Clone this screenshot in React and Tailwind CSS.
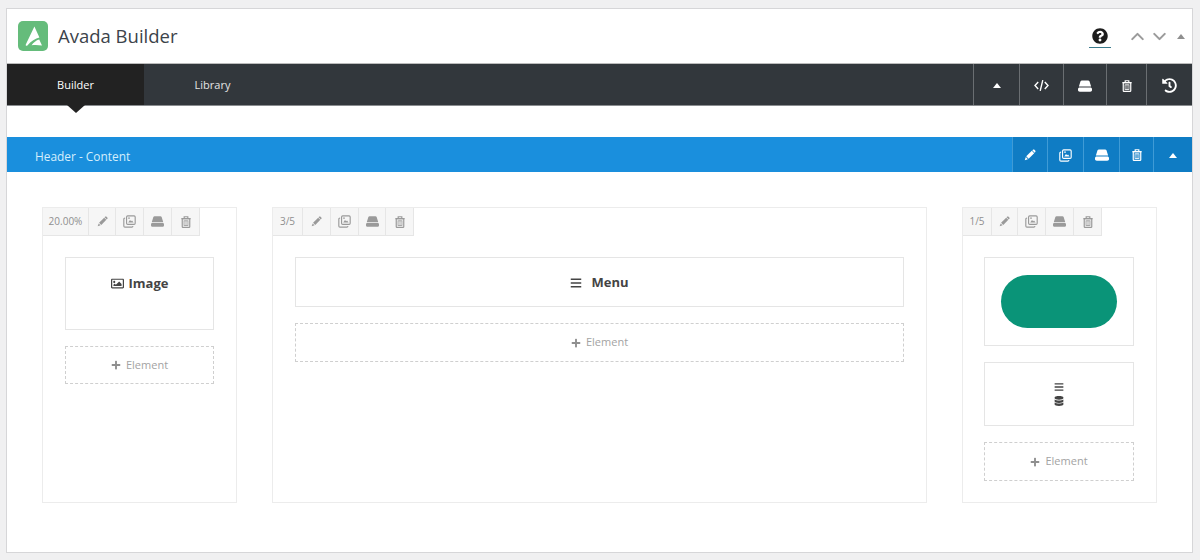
import { ChevronUp, ChevronDown } from "lucide-react";
import {
  FaBars,
  FaDatabase,
  FaHistory,
  FaPlus,
  FaQuestionCircle,
  FaRegImage,
} from "react-icons/fa";

const font = "font-['Open_Sans','Noto_Sans',sans-serif]";

const Pen = ({ size = 12 }) => (
  <svg width={size} height={size} viewBox="0 0 16 16" fill="currentColor">
    <path d="M10.4 2.4 13.6 5.6 6.2 13 3 9.8Z" />
    <path d="M2.4 10.8 5.2 13.6 1 15Z" />
    <path d="M11.6 1.2c.8-.8 1.6-.8 2.3-.1l1 1c.7.7.7 1.5-.1 2.3l-.6.6-3.2-3.2Z" />
  </svg>
);

const Copy = ({ size = 13 }) => (
  <svg width={size} height={size} viewBox="0 0 16 16" fill="none" stroke="currentColor" strokeWidth="1.4">
    <rect x="4.4" y="1" width="10.6" height="10.6" rx="1.4" />
    <path d="M2.6 3.8h-.2C1.6 3.8 1 4.4 1 5.2v8.4c0 .8.6 1.4 1.4 1.4h8.4c.8 0 1.4-.6 1.4-1.4v-.2" />
    <path d="M6.4 9.2 8.6 6l1.5 1.8 1-1 1.9 2.4Z" fill="currentColor" stroke="none" />
    <circle cx="7.4" cy="3.9" r="1" fill="currentColor" stroke="none" />
  </svg>
);

const Drive = ({ size = 14 }) => (
  <svg width={size} height={size} viewBox="0 0 16 16" fill="currentColor">
    <path d="M4.4 1.6h7.2c.7 0 1.2.3 1.5.9L15 8.6H1l1.9-6.1c.3-.6.8-.9 1.5-.9Z" />
    <path d="M2 9.6h12c1.1 0 2 .8 2 1.9v1c0 1.1-.9 2-2 2H2c-1.1 0-2-.9-2-2v-1c0-1.1.9-1.9 2-1.9Z" />
  </svg>
);

const Trash = ({ size = 13 }) => (
  <svg width={size} height={size} viewBox="0 0 16 16" fill="none" stroke="currentColor" strokeWidth="1.6">
    <path d="M1.8 3.4h12.4M5.6 3.2V1h4.8v2.2" />
    <rect x="3" y="3.4" width="10" height="11.8" rx="1" />
    <rect x="5.4" y="6.4" width="5.2" height="6.2" strokeWidth="1.1" />
    <path d="M8 6.4v6.2" strokeWidth="1" />
  </svg>
);

const Code = () => (
  <svg width="15" height="13" viewBox="0 0 15 13" fill="none" stroke="currentColor" strokeWidth="1.4">
    <path d="M4.2 3 1 6.5 4.2 10M10.8 3 14 6.5 10.8 10M8.8 1.2 6.2 11.8" />
  </svg>
);

const Caret = ({ className = "" }) => (
  <span className={`h-0 w-0 border-x-[4px] border-b-[5px] border-x-transparent ${className}`} />
);

const Logo = () => (
  <div className="flex h-[30px] w-[30px] items-center justify-center rounded-[5px] bg-[#65bc7b]">
    <svg width="24" height="24" viewBox="0 0 24 24" fill="#fff">
      <path d="M13.4 2.6 18.4 13.6C14.6 14.4 9.8 17.6 6.4 21.4 5.4 22 4.4 21.4 4.8 20.4Z" />
      <path d="M18.2 15.6 21 21.6C17.6 20.8 13.6 20.8 10.6 21.2 12.4 18.6 15.2 16.4 18.2 15.6Z" />
    </svg>
  </div>
);

const BarButton = ({ width, borderClass, children }) => (
  <div style={{ width }} className={`flex h-full items-center justify-center border-l ${borderClass}`}>
    {children}
  </div>
);

const ToolCell = ({ width, children }) => (
  <div
    style={{ width }}
    className="flex h-full items-center justify-center border-r border-[#e6e6e6] text-[#9a9a9a]"
  >
    {children}
  </div>
);

const ColumnTools = ({ label, widths }) => (
  <div className="flex h-[28px] w-fit border-b border-[#e6e6e6] bg-[#f6f6f6]">
    <ToolCell width={widths[0]}>
      <span className="text-[10px] text-[#8f8f8f]">{label}</span>
    </ToolCell>
    <ToolCell width={widths[1]}><Pen size={11} /></ToolCell>
    <ToolCell width={widths[2]}><Copy /></ToolCell>
    <ToolCell width={widths[3]}><Drive size={13} /></ToolCell>
    <ToolCell width={widths[4]}><Trash size={12} /></ToolCell>
  </div>
);

const AddElement = ({ height = 39 }) => (
  <div
    style={{ height }}
    className="flex items-center justify-center gap-[5px] border border-dashed border-[#cfcfcf] text-[11px] text-[#a3a3a3]"
  >
    <FaPlus size={10} className="text-[#8f8f8f]" />
    <span>Element</span>
  </div>
);

const ElementBox = ({ height, className = "", children }) => (
  <div style={{ height }} className={`flex justify-center border border-[#e5e5e5] ${className}`}>
    {children}
  </div>
);

const Column = ({ width, label, widths, bodyClass = "px-[22px]", children }) => (
  <div style={{ width }} className="h-[296px] border border-[#ececec] bg-white">
    <ColumnTools label={label} widths={widths} />
    <div className={`flex flex-col gap-4 pt-[21px] ${bodyClass}`}>{children}</div>
  </div>
);

export default function App() {
  return (
    <div className={`h-[560px] w-[1200px] overflow-hidden bg-[#f0f0f1] pl-[6px] pt-[8px] ${font}`}>
      <div className="h-[545px] w-[1187px] border border-[#d6d6d8] bg-white">
        {/* title row */}
        <div className="flex h-[54px] items-center pl-[11px]">
          <Logo />
          <h1 className="ml-[10px] text-[18.5px] text-[#3c434a]">Avada Builder</h1>
          <div className="ml-auto flex items-center">
            <div className="flex h-[24px] w-[22px] items-center justify-center border-b border-[#3a7a8c] text-[#1d1d1d]">
              <FaQuestionCircle size={16} />
            </div>
            <ChevronUp size={21} strokeWidth={2.4} className="ml-[16px] text-[#9b9b9b]" />
            <ChevronDown size={21} strokeWidth={2.4} className="ml-[1px] text-[#9b9b9b]" />
            <Caret className="ml-[7px] mr-[7px] border-b-[#8f8f8f]" />
          </div>
        </div>

        {/* dark bar */}
        <div className="flex h-[43px] items-stretch border-y border-t-[#bcbcbc] border-b-[#8a8d90] bg-[#32373c] text-white">
          <div className="relative flex w-[137px] items-center justify-center bg-[#222222] pt-[2px] text-[11px]">
            Builder
            <span className="absolute left-1/2 top-full h-0 w-0 -translate-x-1/2 border-x-[9px] border-t-[8px] border-x-transparent border-t-[#222222]" />
          </div>
          <div className="flex w-[137px] items-center justify-center pt-[2px] text-[11px] text-[#e4e4e4]">Library</div>
          <div className="ml-auto flex h-full items-center">
            <BarButton width={46} borderClass="border-[#6a6e72] pt-[2px]"><Caret className="border-b-white" /></BarButton>
            <BarButton width={44} borderClass="border-[#6a6e72] pt-[2px]"><Code /></BarButton>
            <BarButton width={43} borderClass="border-[#6a6e72] pt-[2px]"><Drive /></BarButton>
            <BarButton width={40} borderClass="border-[#6a6e72] pt-[2px]"><Trash size={12} /></BarButton>
            <BarButton width={46} borderClass="border-[#6a6e72] pt-[2px]"><FaHistory size={15} /></BarButton>
          </div>
        </div>

        {/* section bar */}
        <div className="mt-[31px] flex h-[35px] items-center bg-[#1a8fdd] text-white">
          <span className="pl-[28px] pt-[4px] text-[11.9px] text-[#d4eefc]">Header - Content</span>
          <div className="ml-auto flex h-full items-center bg-[#0f7cc4]">
            <BarButton width={35} borderClass="border-[#3f9bd6] pt-px"><Pen /></BarButton>
            <BarButton width={36} borderClass="border-[#3f9bd6] pt-px"><Copy /></BarButton>
            <BarButton width={36} borderClass="border-[#3f9bd6] pt-px"><Drive /></BarButton>
            <BarButton width={34} borderClass="border-[#3f9bd6] pt-px"><Trash size={12} /></BarButton>
            <BarButton width={39} borderClass="border-[#3f9bd6] pt-px"><Caret className="border-b-white" /></BarButton>
          </div>
        </div>

        {/* columns */}
        <div className="flex gap-[35px] pl-[35px] pt-[35px]">
          <Column width={195} label="20.00%" widths={[46, 27, 28, 28, 28]}>
            <ElementBox height={73} className="pt-[16px]">
              <div className="flex h-fit items-center gap-[5px] text-[13px] font-bold text-[#444444]">
                <FaRegImage size={13} />
                <span>Image</span>
              </div>
            </ElementBox>
            <AddElement height={38} />
          </Column>
          <Column width={655} label="3/5" widths={[30, 28, 28, 27, 28]}>
            <ElementBox height={50} className="items-center pt-px">
              <div className="flex items-center gap-[9px] text-[13px] font-bold text-[#444444]">
                <FaBars size={12} />
                <span>Menu</span>
              </div>
            </ElementBox>
            <AddElement />
          </Column>
          <Column width={195} label="1/5" widths={[29, 26, 28, 28, 28]} bodyClass="pl-[21px] pr-[22px]">
            <ElementBox height={89} className="items-center">
              <div className="h-[53px] w-[116px] rounded-full bg-[#0a9478]" />
            </ElementBox>
            <ElementBox height={64} className="items-center">
              <div className="flex flex-col items-center gap-[4px] text-[#444444]">
                <FaBars size={10} />
                <FaDatabase size={10} />
              </div>
            </ElementBox>
            <AddElement />
          </Column>
        </div>
      </div>
    </div>
  );
}
